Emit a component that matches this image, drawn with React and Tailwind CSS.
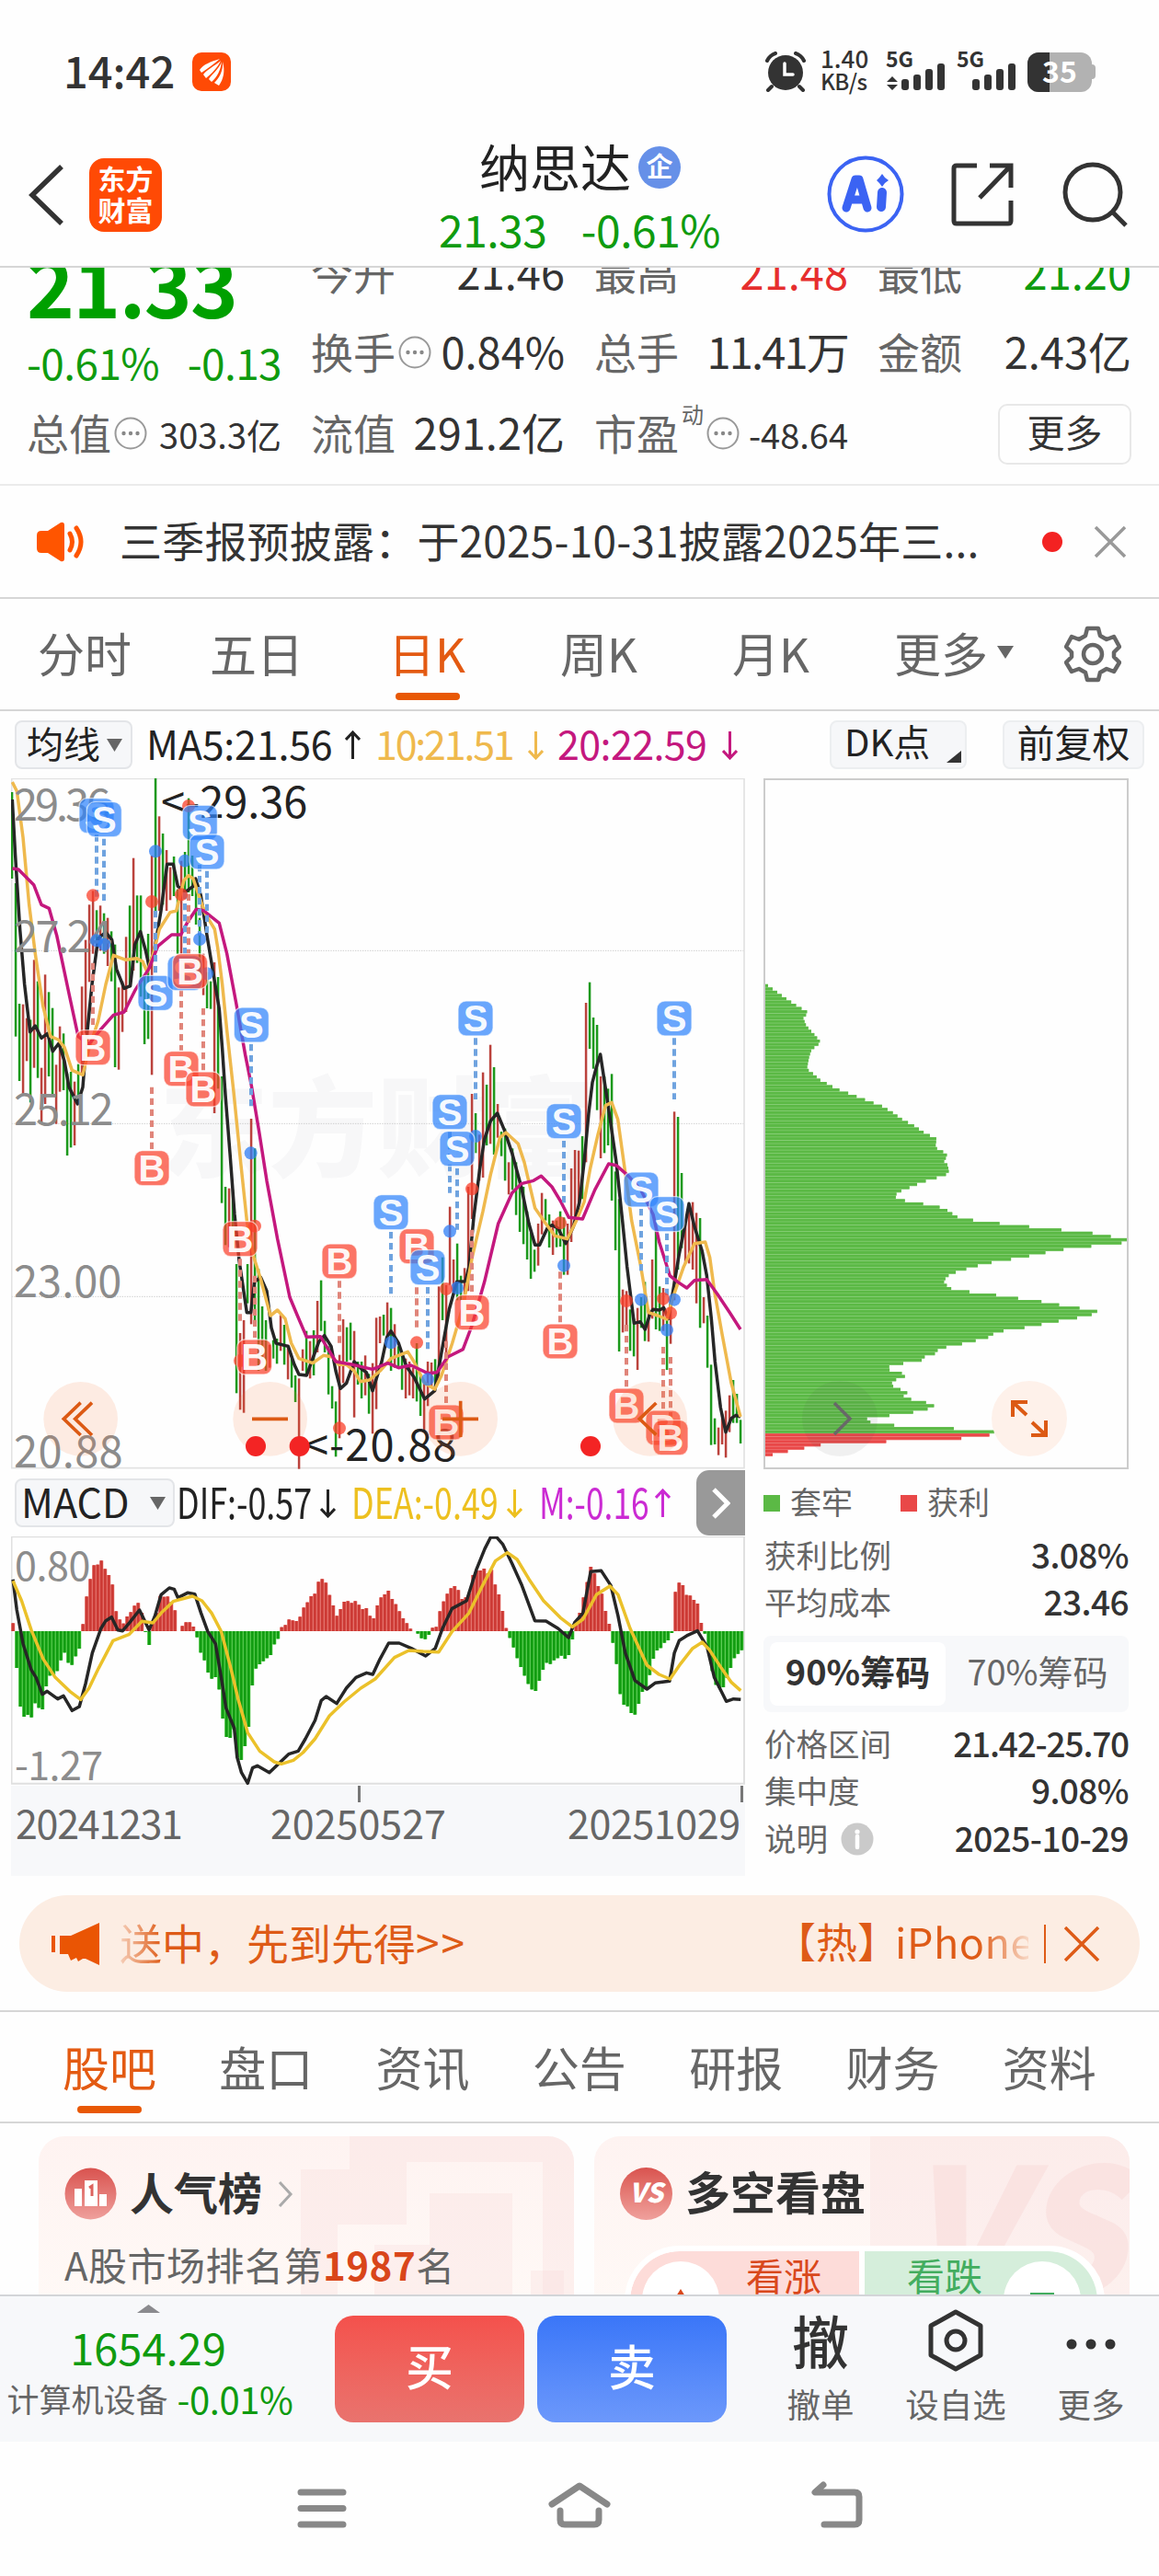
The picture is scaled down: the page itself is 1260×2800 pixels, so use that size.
import React from 'react';

// [high, low, up] per trading day
const CANDLES = [
  [273,555,0],[570,1070,0],[963,1215,0],[965,1260,1],[1010,1150,1],[1015,1285,0],[820,1172,1],[890,1205,0],[1172,1350,1],[868,1290,1],
  [925,1200,0],[977,1262,0],[1162,1355,1],[1037,1250,1],[1060,1245,0],[1190,1458,0],[1185,1432,0],[1217,1425,1],[1160,1290,0],[907,1190,1],
  [755,1060,1],[640,892,1],[595,800,1],[658,760,0],[643,790,1],[668,800,0],[683,840,1],[727,890,0],[770,1170,0],[910,1178,1],
  [890,1055,1],[745,990,1],[643,910,0],[488,855,1],[610,830,0],[610,940,0],[870,1095,0],[735,1078,0],[480,1195,1],[228,660,0],
  [352,660,1],[408,640,0],[462,660,1],[518,625,1],[483,612,0],[590,800,0],[497,800,1],[468,600,0],[293,600,0],[480,612,0],
  [560,705,0],[683,890,0],[800,935,1],[860,978,0],[890,980,0],[828,1320,1],[876,1240,0],[1200,1613,0],[1560,1750,0],[1565,1757,1],
  [1570,1700,0],[1812,2233,0],[2037,2287,1],[1995,2297,1],[1812,1940,0],[1338,2008,1],[1435,2000,0],[1828,2160,0],[1950,2135,0],[1995,2160,0],
  [2075,2150,1],[2060,2120,0],[2055,2137,0],[1978,2095,1],[2010,2140,0],[2075,2188,1],[2120,2215,0],[2175,2262,0],[2185,2480,1],[2090,2160,1],
  [2030,2175,0],[2063,2185,1],[2028,2175,0],[1932,2100,1],[1865,2030,0],[1997,2100,0],[2080,2237,0],[2210,2283,0],[2260,2440,0],[2108,2380,1],
  [1992,2200,1],[2018,2130,0],[2003,2125,0],[2030,2312,1],[2130,2205,0],[2130,2250,0],[2110,2240,1],[2170,2300,0],[2135,2365,1],[1987,2285,1],
  [1983,2070,1],[1977,2045,0],[1937,2060,1],[1955,2160,0],[2008,2150,1],[2080,2150,0],[2110,2222,0],[2120,2250,1],[2130,2240,1],[2150,2250,1],
  [2070,2260,0],[2175,2307,0],[2200,2355,1],[2130,2275,1],[2133,2210,1],[2122,2220,0],[1885,2180,1],[1790,1995,0],[1880,2100,1],[1625,1880,1],
  [1797,1900,1],[1745,1930,0],[1850,1930,0],[1825,1930,1],[1560,1900,1],[1257,1665,1],[1320,1450,0],[1390,1540,1],[1187,1530,1],[1227,1425,0],
  [1097,1420,1],[1170,1455,0],[1290,1400,1],[1380,1460,0],[1370,1540,0],[1480,1585,1],[1435,1570,0],[1480,1652,0],[1540,1707,0],[1560,1747,0],
  [1640,1797,0],[1710,1860,0],[1765,1837,0],[1680,1817,1],[1580,1715,1],[1600,1670,0],[1650,1758,0],[1670,1782,1],[1670,1757,0],[1640,1755,0],
  [1660,1847,0],[1680,1847,1],[1500,1740,1],[1440,1660,1],[1442,1620,1],[1395,1600,0],[960,1480,1],[893,1110,0],[1008,1175,0],[1032,1310,0],
  [1200,1467,1],[1200,1450,0],[1240,1425,0],[1192,1605,0],[1510,1767,0],[1600,2097,0],[1895,2035,1],[1900,2010,1],[1960,2095,0],[1990,2113,0],
  [1955,2157,1],[1920,2020,0],[1870,2063,0],[1960,2065,1],[1797,1990,1],[1700,2025,0],[1885,2030,0],[1890,2030,1],[1990,2157,0],[1940,2072,1],
  [1315,1930,1],[1332,1830,0],[1515,1760,0],[1680,1810,1],[1640,1810,1],[1610,1830,1],[1645,1940,1],[1662,2020,0],[1920,2005,1],[1980,2150,0],
  [2140,2402,0],[2315,2400,0],[2345,2435,1],[2300,2400,1],[2290,2443,1],[2240,2360,1],[2190,2330,0],[2235,2330,0],[2320,2397,0],
];

const MA5 = '40,297 50,480 65,720 80,900 98,1055 115,1035 135,1075 155,1060 172,1118 192,1092 210,1150 225,1235 253,1290 270,1235 285,1050 300,900 320,750 345,730 365,755 380,850 405,913 425,905 440,770 458,728 475,790 487,845 505,780 525,660 545,508 565,508 580,580 605,598 630,580 638,555 655,610 675,740 700,890 715,980 725,1110 735,1260 750,1450 765,1650 780,1800 805,1970 818,1970 830,1870 850,1855 870,1900 885,2020 900,2070 940,2080 960,2140 975,2172 1000,2175 1020,2120 1040,2065 1058,2045 1080,2080 1095,2160 1110,2218 1130,2200 1155,2130 1180,2155 1195,2165 1215,2225 1245,2130 1262,2050 1275,2030 1300,2070 1325,2145 1350,2180 1385,2252 1418,2225 1440,2100 1465,1960 1490,1870 1518,1868 1530,1820 1545,1660 1565,1500 1580,1405 1600,1345 1622,1320 1645,1375 1670,1450 1700,1560 1725,1680 1745,1750 1760,1750 1785,1695 1800,1685 1820,1695 1845,1745 1870,1690 1890,1610 1905,1480 1920,1320 1932,1220 1945,1170 1958,1128 1972,1220 1990,1340 2010,1480 2030,1670 2045,1820 2068,2005 2088,2000 2104,2025 2120,1975 2130,1960 2150,1962 2165,1955 2180,1990 2190,1930 2215,1780 2235,1680 2247,1615 2265,1690 2290,1770 2305,1850 2320,1990 2332,2130 2350,2280 2367,2360 2385,2315 2400,2305 2415,2310';
const MA10 = '40,240 55,270 75,420 95,640 115,800 140,970 165,1070 190,1080 210,1105 235,1180 270,1195 290,1110 320,1020 345,900 370,805 410,820 445,815 465,825 480,860 500,800 520,720 555,665 575,660 600,560 615,545 630,555 645,600 670,670 700,720 710,780 725,900 740,1050 762,1250 785,1480 805,1670 828,1790 850,1860 882,1980 905,1962 930,1990 950,2070 975,2120 1020,2135 1055,2110 1085,2115 1105,2140 1130,2140 1155,2160 1175,2195 1205,2190 1240,2160 1275,2120 1330,2098 1350,2130 1385,2200 1418,2220 1440,2175 1475,2070 1510,1950 1540,1790 1575,1640 1600,1520 1630,1400 1650,1383 1690,1420 1710,1480 1745,1630 1780,1680 1810,1720 1850,1730 1880,1670 1905,1610 1925,1500 1950,1390 1975,1295 1995,1285 2015,1340 2040,1520 2060,1670 2090,1820 2115,1970 2145,1980 2175,1992 2195,1920 2230,1820 2265,1745 2300,1740 2315,1790 2330,1900 2355,2040 2385,2200 2415,2310';
const MA20 = '40,522 60,525 110,575 135,640 160,652 185,740 225,930 255,1070 290,1095 330,1045 370,1000 405,990 440,920 485,850 515,775 560,738 590,738 610,700 640,655 665,660 715,700 740,800 770,960 800,1130 820,1230 845,1380 870,1540 905,1730 945,1920 970,1980 1000,2050 1045,2048 1095,2130 1150,2140 1215,2155 1265,2135 1300,2150 1340,2142 1395,2168 1425,2165 1460,2115 1510,2090 1540,2010 1580,1870 1625,1680 1670,1580 1700,1550 1740,1540 1765,1525 1800,1560 1830,1610 1855,1660 1900,1665 1940,1570 1985,1485 2010,1490 2050,1525 2090,1570 2130,1650 2150,1740 2185,1850 2210,1870 2240,1890 2265,1865 2305,1862 2340,1910 2380,1970 2415,2025';

// DK signals: dashed links [type, x, from, to], dots and boxes [type, x, y]
const LINKS = [
  ['S',315,412,615],['S',339,425,627],['S',507,660,865],['S',603,600,800],['S',651,510,740],['S',675,530,732],['S',819,1095,1297],['S',1551,1075,1275],
  ['S',2199,1075,1275],['S',1467,1380,1580],['S',1491,1500,1700],['S',1275,1707,1910],['S',1395,1887,2090],['S',1839,1410,1612],['S',2091,1632,1835],['S',2175,1712,1915],
  ['B',303,830,1045],['B',615,605,800],['B',591,918,1115],['B',663,978,1180],['B',495,1235,1437],['B',783,1795,2000],['B',831,1850,2055],['B',1107,1867,2070],
  ['B',1359,1888,2020],['B',1455,2063,2268],['B',1539,1700,1910],['B',1827,1837,2002],['B',2043,2010,2212],['B',2163,2082,2290],['B',2187,2115,2320],
];
const DOTS = [
  ['S',507,466],['S',603,497],['S',315,757],['S',340,770],['S',651,753],['S',675,865],['S',818,1450],['S',1467,1705],['S',1491,1890],['S',1275,2068],
  ['S',1395,2188],['S',1551,1395],['S',1839,1817],['S',2091,1928],['S',2175,2027],['S',2199,1928],
  ['B',303,610],['B',495,630],['B',615,318],['B',591,607],['B',831,1688],['B',783,2127],['B',1107,2347],['B',1359,2068],['B',1455,1893],['B',1539,1567],
  ['B',1827,1678],['B',2043,1932],['B',2163,1925],['B',2187,1972],
];
const SIGNALS = [
  ['S',315,350],['S',340,362],['S',652,373],['S',675,468],['S',507,928],['S',603,863],['B',620,857],['B',303,1106],['B',591,1175],['B',663,1242],
  ['S',820,1032],['B',495,1499],['B',783,1730],['B',830,2115],['B',1107,1803],['S',1551,1011],['S',2199,1011],['S',1467,1316],['S',1491,1436],
  ['S',1275,1643],['B',1359,1754],['S',1395,1823],['S',1839,1346],['B',1539,1970],['B',1827,2064],['S',2091,1569],['S',2175,1649],
  ['B',2043,2274],['B',1455,2328],['B',2163,2346],['B',2187,2378],
];

const MACD = [26,-120,-246,-279,-273,-281,-235,-250,-255,-180,-145,-142,-130,-95,-70,-103,-110,-82,-57,23,113,170,215,217,230,203,183,152,65,38,25,48,62,83,92,60,-3,-45,30,60,115,112,113,95,68,0,17,29,29,15,-20,-70,-95,-135,-155,-150,-190,-285,-345,-348,-320,-412,-420,-375,-312,-177,-122,-108,-98,-88,-78,-43,-25,13,20,38,35,33,47,77,94,114,122,161,170,158,118,84,50,72,96,98,92,98,86,72,75,50,42,84,110,120,132,105,88,65,42,26,8,0,-8,-23,-26,-12,11,14,65,97,122,140,147,134,105,110,124,183,198,198,204,188,200,152,120,66,10,-22,-53,-88,-117,-145,-172,-190,-195,-162,-126,-103,-107,-95,-88,-80,-90,-78,-27,30,60,110,160,210,188,147,122,66,24,-38,-107,-205,-240,-245,-267,-272,-237,-198,-183,-143,-90,-63,-55,-38,-30,-6,128,158,150,118,116,102,90,27,-8,-60,-130,-175,-186,-183,-152,-120,-88,-74,-62];
const DIF = '27,380 35,480 48,590 65,675 75,700 88,755 98,745 120,770 132,760 150,808 165,795 178,720 192,620 210,540 220,515 232,503 245,545 255,548 270,520 290,480 310,545 322,500 335,430 352,408 362,412 370,440 390,424 405,428 418,490 432,550 448,590 460,700 470,800 487,865 493,960 502,1010 515,1045 525,995 535,988 560,1010 580,980 600,950 620,940 635,900 655,840 668,775 678,762 700,785 720,735 740,700 762,685 775,690 790,640 808,588 830,588 855,605 885,630 905,605 920,540 940,475 970,450 990,350 1008,280 1020,243 1032,242 1045,265 1065,330 1085,400 1112,515 1135,516 1160,540 1182,570 1195,520 1212,490 1228,355 1250,352 1270,400 1285,500 1300,620 1320,710 1345,738 1362,718 1392,712 1402,620 1412,580 1430,562 1450,548 1470,600 1485,700 1510,778 1525,770 1540,772';
const DEA = '27,385 45,450 65,545 90,640 115,700 145,745 168,772 185,735 205,670 235,580 268,560 295,517 318,522 335,490 360,452 400,435 420,450 440,490 460,550 480,670 495,770 515,880 540,940 570,975 585,982 610,970 630,945 655,900 685,825 715,780 750,735 780,705 820,635 850,612 880,615 912,617 940,550 975,490 1000,410 1030,320 1055,293 1075,315 1100,380 1130,450 1165,505 1190,535 1212,510 1240,430 1268,402 1285,430 1310,540 1345,660 1370,690 1393,705 1415,655 1440,605 1460,585 1475,610 1500,670 1520,715 1540,743';

// chip distribution, [price position, volume]
const CHIPS = [[78,75],[87,90],[96,105],[105,120],[114,135],[123,151],[132,167],[141,185],[150,203],[159,199],[168,190],[186,199],[195,207],[213,227],[231,245],[240,239],[249,225],[258,215],[275,209],[302,203],[311,208],[320,222],[338,246],[347,267],[356,286],[365,309],[374,338],[392,393],[410,449],[428,484],[446,514],[464,554],[482,585],[500,627],[515,622],[527,628],[536,650],[545,661],[563,650],[572,663],[590,666],[599,655],[608,621],[617,585],[626,558],[635,533],[644,506],[658,485],[669,520],[678,580],[687,635],[696,661],[714,693],[723,744],[732,831],[741,928],[750,1034],[759,1136],[768,1196],[776,1251],[785,1240],[794,1140],[803,1046],[812,986],[821,933],[830,874],[839,809],[848,763],[857,725],[866,690],[875,666],[884,655],[893,650],[902,659],[911,672],[920,731],[929,819],[938,891],[947,968],[956,1026],[965,1093],[974,1151],[983,1133],[992,1085],[1001,1024],[1010,968],[1019,912],[1028,843],[1037,810],[1046,794],[1055,752],[1064,707],[1073,655],[1082,628],[1091,620],[1100,585],[1108,580],[1117,519],[1126,471],[1135,471],[1144,512],[1153,523],[1162,494],[1171,480],[1180,484],[1189,508],[1198,530],[1207,518],[1216,543],[1225,592],[1234,618],[1243,596],[1252,548],[1261,469],[1270,396],[1279,410],[1288,491],[1297,692],[1305,815],[1314,803],[1323,719],[1332,471],[1341,249],[1350,195],[1359,141],[1368,90]];

function chipAt(y) {
  for (let i = 1; i < CHIPS.length; i++) {
    const [y0, v0] = CHIPS[i - 1];
    const [y1, v1] = CHIPS[i];
    if (y <= y1) return v0 + ((v1 - v0) * (y - y0)) / (y1 - y0);
  }
  return 90;
}

function MoreDots() {
  return (
    <svg className="w-[36px] h-[36px] shrink-0" viewBox="0 0 36 36" fill="none">
      <circle cx="18" cy="18" r="16.5" stroke="#999" strokeWidth="2" />
      <circle cx="10.5" cy="18" r="2.2" fill="#888" />
      <circle cx="18" cy="18" r="2.2" fill="#888" />
      <circle cx="25.5" cy="18" r="2.2" fill="#888" />
    </svg>
  );
}

function Signal({ x, y }) {
  return (
    <g fill="#333">
      <rect x={x} y={y + 17} width="8" height="12" rx="3" />
      <rect x={x + 13} y={y + 12} width="8" height="17" rx="3" />
      <rect x={x + 26} y={y + 6} width="8" height="23" rx="3" />
      <rect x={x + 39} y={y} width="8" height="29" rx="3" />
    </g>
  );
}

function StatusBar() {
  return (
    <div className="h-[139px] relative flex items-center pt-[17px] pl-[69px] pr-[69px]">
      <span className="text-[47px] font-medium leading-[47px] -mt-[6px]">14:42</span>
      <svg className="ml-[19px] w-[42px] h-[42px]" viewBox="0 0 42 42">
        <rect width="42" height="42" rx="10" fill="#ff4a05" />
        <path d="M30 7 C20 10 12 13 8 19 L10 22 C16 18 24 12 30 7Z M31 9 C24 15 15 19 12 24 L15 28 C21 23 28 16 31 9Z M32 10 C29 18 21 24 18 29 L21 32 C27 27 31 19 32 10Z M33 10 C34 20 29 28 24 33 L29 36 C34 29 36 20 33 10Z" fill="#fff" />
      </svg>
      <div className="ml-auto flex items-center">
        <svg className="w-[46px] h-[44px]" viewBox="0 0 46 44" fill="none" stroke="#333" strokeLinecap="round">
          <circle cx="23" cy="23" r="19" fill="#333" stroke="none" />
          <path d="M3 10 Q6 4 12 2 M43 10 Q40 4 34 2" strokeWidth="4" />
          <path d="M8 38 L4 42 M38 38 L42 42" strokeWidth="4" />
          <path d="M22 13 V25 H31" stroke="#fff" strokeWidth="3.5" />
        </svg>
        <div className="ml-[15px] w-[56px] text-[26px] font-medium leading-[25px] -mt-[6px] whitespace-nowrap">
          <div>1.40</div>
          <div className="text-[24px] tracking-[-0.6px]">KB/s</div>
        </div>
        <div className="relative ml-[15px] w-[144px] h-[44px]">
          <svg className="w-[144px] h-[44px]" viewBox="0 0 144 44">
            <path d="M7 27 L13 33 H1Z M7 42 L13 36 H1Z" fill="#333" />
            <Signal x={17} y={13} />
            <Signal x={94} y={13} />
          </svg>
          <span className="absolute left-0 -top-[4px] text-[23px] font-bold leading-[23px]">5G</span>
          <span className="absolute left-[77px] -top-[4px] text-[23px] font-bold leading-[23px]">5G</span>
        </div>
        <div className="relative ml-[10px] w-[70px] h-[43px] rounded-[12px] overflow-hidden bg-[#b2b2b2] flex items-center justify-center">
          <div className="absolute left-0 top-0 h-full w-[24px] bg-[#333]"></div>
          <span className="relative text-white text-[32px] font-bold leading-[32px] -mt-[5px]">35</span>
        </div>
        <div className="w-[4px] h-[16px] bg-[#b2b2b2] rounded-r"></div>
      </div>
    </div>
  );
}

function Header() {
  return (
    <div className="h-[152px] border-b-2 border-[#d6d6d6] flex pl-[30px] relative">
      <svg className="w-[40px] h-[68px] mt-[39px]" viewBox="0 0 40 68" fill="none" stroke="#333" strokeWidth="5.5">
        <path d="M37 3 L5 34 L37 65" />
      </svg>
      <div className="ml-[27px] mt-[33px] w-[79px] h-[80px] rounded-[16px] bg-[#ff4a05] text-white text-[30px] font-bold flex flex-col items-center justify-center leading-[34px] pb-[4px]">
        <div>东方</div>
        <div>财富</div>
      </div>
      <div className="ml-[301px] w-[306px]">
        <div className="flex items-center ml-[44px] mt-[15px] h-[56px]">
          <span className="text-[55px] leading-[55px] -mt-[6px] text-[#222]">纳思达</span>
          <div className="ml-[8px] w-[46px] h-[46px] rounded-full bg-[#6690e8] text-white text-[29px] font-bold leading-[40px] text-center">企</div>
        </div>
        <div className="flex justify-between mt-[14px] text-[#0f9b0f] text-[48px] leading-[48px] tracking-[-0.5px]">
          <span>21.33</span>
          <span>-0.61%</span>
        </div>
      </div>
      <svg className="ml-[116px] mt-[30px] w-[84px] h-[84px]" viewBox="0 0 84 84" fill="none">
        <circle cx="42" cy="42" r="39.5" stroke="#3b63f3" strokeWidth="4" />
        <path d="M21 57 L31 26 H35 L44 57 M24 48 H41" stroke="#3b63f3" strokeWidth="9" strokeLinecap="round" strokeLinejoin="round" />
        <path d="M60 40 L59 56" stroke="#3b63f3" strokeWidth="10" strokeLinecap="round" />
        <path d="M60 20 L63 24 L67 27 L63 30 L60 34 L57 30 L54 27 L57 24Z" fill="#3b63f3" />
      </svg>
      <svg className="ml-[50px] mt-[37px] w-[72px] h-[72px]" viewBox="0 0 72 72" fill="none" stroke="#333" strokeWidth="5">
        <path d="M29 4 H7 Q4 4 4 7 V64 Q4 67 7 67 H63 Q66 67 66 64 V42" />
        <path d="M43 4 H66 V28 M65 5 L32 39" />
      </svg>
      <svg className="ml-[49px] mt-[36px] w-[74px] h-[74px]" viewBox="0 0 74 74" fill="none" stroke="#333" strokeWidth="5">
        <circle cx="34" cy="34" r="30" />
        <path d="M56 56 L70 70" />
      </svg>
    </div>
  );
}

function Cell({ label, value, color, icon, small, tight, sup }) {
  return (
    <div className="flex items-center h-[50px] text-[46px] leading-[50px] text-[#666]">
      <span>{label}</span>
      {sup && <span className="text-[24px] leading-[24px] -mt-[38px] ml-[3px]">{sup}</span>}
      {icon && <span className="mt-[3px] ml-[3px]"><MoreDots /></span>}
      <span className={`ml-auto whitespace-nowrap ${small ? 'text-[38px] mt-[6px]' : tight ? 'text-[47px] tracking-[-1.8px]' : 'text-[47px]'} ${color || 'text-[#333]'}`}>{value}</span>
    </div>
  );
}

function Quote() {
  return (
    <div className="h-[237px] border-b-2 border-[#ebebeb] overflow-hidden pl-[29px] pr-[29px]">
      <div className="grid grid-cols-[277px_276px_276px_276px] gap-x-[32px] -mt-[21px]">
        <div className="h-[134px] -mt-[6px]">
          <div className="text-[#00a000] text-[88px] font-bold leading-[87px] tracking-[-1.6px] h-[87px]">21.33</div>
          <div className="flex justify-between text-[#0f9b0f] text-[46px] leading-[45px] mt-[20px] tracking-[-0.6px]">
            <span>-0.61%</span>
            <span>-0.13</span>
          </div>
        </div>
        <div className="flex flex-col gap-[36px]">
          <Cell label="今开" value="21.46" />
          <Cell label="换手" value="0.84%" icon />
        </div>
        <div className="flex flex-col gap-[36px]">
          <Cell label="最高" value="21.48" color="text-[#e62e2e]" />
          <Cell label="总手" value="11.41万" tight />
        </div>
        <div className="flex flex-col gap-[36px]">
          <Cell label="最低" value="21.20" color="text-[#0f9b0f]" />
          <Cell label="金额" value="2.43亿" />
        </div>
      </div>
      <div className="grid grid-cols-[277px_276px_276px_276px] gap-x-[32px] mt-[38px]">
        <Cell label="总值" value="303.3亿" icon small />
        <Cell label="流值" value="291.2亿" />
        <Cell label="市盈" sup="动" value="-48.64" icon small />
        <div className="ml-auto w-[145px] h-[66px] mt-[-5px] border-2 border-[#e8e8e8] rounded-[10px] text-[41px] leading-[54px] text-center text-[#333]">更多</div>
      </div>
    </div>
  );
}

function Notice() {
  return (
    <div className="h-[123px] border-b-2 border-[#d6d6d6] flex items-center pl-[40px] pr-[35px]">
      <svg className="w-[52px] h-[44px]" viewBox="0 0 52 44">
        <path d="M0 15 Q0 10 5 10 H12 L26 1 Q30 0 30 4 V40 Q30 44 26 43 L12 34 H5 Q0 34 0 29Z" fill="#ff5500" />
        <path d="M36 13 Q41 22 36 31 M43 7 Q53 22 43 37" fill="none" stroke="#ff5500" strokeWidth="5" strokeLinecap="round" />
      </svg>
      <span className="ml-[38px] text-[46px] leading-[50px] -mt-[6px] text-[#333] whitespace-nowrap tracking-[0.2px]">三季报预披露：于2025-10-31披露2025年三...</span>
      <div className="ml-auto w-[22px] h-[22px] rounded-full bg-[#f32222] shrink-0"></div>
      <svg className="ml-[34px] w-[36px] h-[36px] shrink-0" viewBox="0 0 36 36" stroke="#999" strokeWidth="3.5">
        <path d="M2 2 L34 34 M34 2 L2 34" />
      </svg>
    </div>
  );
}

function PeriodTabs() {
  return (
    <div className="h-[122px] border-b-2 border-[#d6d6d6] relative flex items-center text-[51px] leading-[60px] text-[#666] pl-[41px] pr-[41px]">
      <div className="flex items-center -mt-[4px]">
        <span className="w-[187px]">分时</span>
        <span className="w-[194px]">五日</span>
        <span className="w-[187px] text-[#e35a12] relative">
          日K
          <span className="absolute left-[8px] top-[74px] w-[70px] h-[8px] rounded-full bg-[#e85805]"></span>
        </span>
        <span className="w-[187px]">周K</span>
        <span className="w-[176px]">月K</span>
        <span>更多</span>
        <svg className="ml-[10px] w-[18px] h-[14px]" viewBox="0 0 18 14"><path d="M0 0 H18 L9 14Z" fill="#666" /></svg>
      </div>
      <svg className="ml-auto w-[62px] h-[62px]" viewBox="0 0 62 62" fill="none" stroke="#666" strokeWidth="4.5" strokeLinejoin="round">
        <path d="M25 3 H37 L39 11 L46 15 L54 12 L60 23 L54 29 V34 L60 40 L54 50 L46 47 L39 51 L37 59 H25 L23 51 L16 47 L8 50 L2 40 L8 34 V29 L2 23 L8 12 L16 15 L23 11Z" />
        <circle cx="31" cy="31" r="10" />
      </svg>
    </div>
  );
}

function Arrow({ up, color }) {
  return (
    <svg className="w-[17px] h-[32px] shrink-0" viewBox="0 0 17 32" fill="none" stroke={color} strokeWidth="3">
      <path d={up ? 'M8.5 31 V2 M1 10 L8.5 2 L16 10' : 'M8.5 1 V30 M1 22 L8.5 30 L16 22'} />
    </svg>
  );
}

function MaRow() {
  return (
    <div className="h-[73px] flex items-center text-[43px] leading-[50px] pl-[16px] pr-[16px] text-[#222]">
      <div className="w-[128px] h-[53px] border-2 border-[#e3e5e8] rounded-[8px] bg-[#f6f7f9] flex items-center pl-[11px] shrink-0">
        <span className="text-[40px] -mt-[5px]">均线</span>
        <svg className="ml-[7px] w-[17px] h-[14px]" viewBox="0 0 17 14"><path d="M0 0 H17 L8.5 14Z" fill="#666" /></svg>
      </div>
      <span className="ml-[15px] -mt-[5px] w-[216px] whitespace-nowrap tracking-[-0.2px]">MA5:21.56</span>
      <Arrow up color="#222" />
      <span className="ml-[16px] -mt-[5px] w-[166px] whitespace-nowrap text-[#efb94d] tracking-[-2.2px]">10:21.51</span>
      <Arrow color="#efb94d" />
      <span className="ml-[15px] -mt-[5px] w-[179px] whitespace-nowrap text-[#c4187e] tracking-[-0.6px]">20:22.59</span>
      <Arrow color="#c4187e" />
      <div className="relative ml-auto w-[149px] h-[53px] border-2 border-[#eceef0] rounded-[8px] bg-[#f6f7f9] pl-[14px] text-[40px] leading-[40px] shrink-0">
        DK点
        <svg className="absolute right-[4px] bottom-[5px] w-[16px] h-[13px]" viewBox="0 0 16 13"><path d="M16 0 V13 H0Z" fill="#333" /></svg>
      </div>
      <div className="ml-[39px] w-[154px] h-[53px] border-2 border-[#eceef0] rounded-[8px] bg-[#f6f7f9] text-center text-[41px] leading-[40px] shrink-0">前复权</div>
    </div>
  );
}

function KChart() {
  return (
    <svg className="block w-[798px] h-[751px]" viewBox="36 228 2394 2253" fill="none">
      <text x="520" y="1500" fontSize="355" fontWeight="900" fill="#f7f7f8">东方财富</text>
      <path d="M38 790 H2428 M38 1354 H2428 M38 1918 H2428" stroke="#ccc" strokeWidth="3" strokeDasharray="4 4" />
      <rect x="38" y="229" width="2389" height="2248" stroke="#e2e2e2" strokeWidth="5" />
      {CANDLES.map(([h, l, up], i) => (
        <rect key={i} x={35.5 + 12 * i} y={h} width="7.5" height={l - h} fill={up ? '#bb423c' : '#1b991b'} />
      ))}
      <g strokeWidth="10.5" strokeLinejoin="round">
        <polyline points={MA5} stroke="#262626" />
        <polyline points={MA10} stroke="#efb94d" />
        <polyline points={MA20} stroke="#c4187e" />
      </g>
      <g fill="#8c8c8c" fontSize="141">
        <text x="45" y="365" textLength="315">29.36</text>
        <text x="45" y="796" textLength="322">27.24</text>
        <text x="45" y="1360" textLength="326">25.12</text>
        <text x="45" y="1921" textLength="352">23.00</text>
        <text x="45" y="2474" textLength="356">20.88</text>
      </g>
      <g fill="#222" fontSize="141">
        <text x="525" y="358" textLength="478">&lt;-29.36</text>
        <text x="993" y="2455" textLength="497">&lt;-20.88</text>
      </g>
      {LINKS.map(([t, x, a, b], i) => (
        <path key={i} d={`M${x} ${a} V${b}`} stroke={t === 'S' ? '#6fa3df' : '#e0857a'} strokeWidth="12" strokeDasharray="22 14" />
      ))}
      {DOTS.map(([t, x, y], i) => (
        <circle key={i} cx={x} cy={y} r="21" fill={t === 'S' ? '#2f7df5' : '#f9402b'} opacity="0.75" />
      ))}
      {SIGNALS.map(([t, x, y], i) => (
        <g key={i}>
          <rect x={x - 57} y={y - 57} width="114" height="114" rx="26" fill={t === 'S' ? '#2f83fb' : '#f9402b'} fillOpacity="0.72" stroke="#fff" strokeOpacity="0.6" strokeWidth="4" />
          <text x={x} y={y + 43} fontSize="120" fontWeight="700" fill="#fff" fillOpacity="0.95" textAnchor="middle" fontFamily="Liberation Sans">{t}</text>
        </g>
      ))}
      {[263, 881, 1502, 2120].map((x) => (
        <circle key={x} cx={x} cy="2317" r="121" fill="#fb7a3c" fillOpacity="0.14" />
      ))}
      <g stroke="#dc5a14" strokeWidth="11">
        <path d="M263 2264 L208 2317 L263 2370 M300 2264 L245 2317 L300 2370" />
        <path d="M822 2317 H939" />
        <path d="M1443 2317 H1560 M1502 2258 V2376" />
        <path d="M2140 2265 L2086 2317 L2140 2369" />
      </g>
      <g fill="#f32424">
        <circle cx="834" cy="2406" r="33" />
        <circle cx="977" cy="2406" r="33" />
        <circle cx="1926" cy="2406" r="33" />
      </g>
    </svg>
  );
}

function MacdRow() {
  return (
    <div className="h-[73px] flex items-center pl-[4px] text-[46px] leading-[50px] text-[#222]">
      <div className="w-[174px] h-[53px] border-2 border-[#e3e5e8] rounded-[8px] bg-[#f6f7f9] flex items-center pl-[5px] shrink-0">
        <span className="text-[43px] -mt-[5px]">MACD</span>
        <svg className="ml-auto mr-[8px] w-[17px] h-[14px]" viewBox="0 0 17 14"><path d="M0 0 H17 L8.5 14Z" fill="#666" /></svg>
      </div>
      <span className="ml-[2px] -mt-[5px] w-[156px] whitespace-nowrap"><span className="inline-block origin-left scale-x-[.78]">DIF:-0.57</span></span>
      <Arrow color="#222" />
      <span className="ml-[17px] -mt-[5px] w-[169px] whitespace-nowrap text-[#edc01f]"><span className="inline-block origin-left scale-x-[.78]">DEA:-0.49</span></span>
      <Arrow color="#edc01f" />
      <span className="ml-[18px] -mt-[5px] w-[126px] whitespace-nowrap text-[#cb2bd3]"><span className="inline-block origin-left scale-x-[.77]">M:-0.16</span></span>
      <Arrow up color="#cb2bd3" />
      <div className="ml-auto w-[53px] h-[71px] bg-[#999] rounded-l-[14px] flex items-center justify-center shrink-0">
        <svg className="w-[20px] h-[34px]" viewBox="0 0 20 34" fill="none" stroke="#fff" strokeWidth="5"><path d="M2 2 L17 17 L2 32" /></svg>
      </div>
    </div>
  );
}

function MacdChart() {
  return (
    <div className="relative h-[270px]">
      <svg className="block w-[798px] h-[270px]" viewBox="23 240 1526 810" preserveAspectRatio="none" fill="none">
        <rect x="24" y="241" width="1523" height="805" stroke="#e0e0e0" strokeWidth="2" vectorEffect="non-scaling-stroke" />
        {MACD.map((v, i) => (
          <g key={i}>
            <rect x={23.4 + 7.65 * i} y={v > 0 ? 549 - v : 549} width="7.65" height={Math.abs(v)} fill={v > 0 ? '#e05c55' : '#3cc232'} />
            <rect x={24.6 + 7.65 * i} y={v > 0 ? 549 - v : 549} width="5" height={Math.abs(v)} fill={v > 0 ? '#cc3a35' : '#129c12'} />
          </g>
        ))}
        <polyline points={DIF} stroke="#262626" strokeWidth="3.5" strokeLinejoin="round" vectorEffect="non-scaling-stroke" />
        <polyline points={DEA} stroke="#ebc12a" strokeWidth="3.5" strokeLinejoin="round" vectorEffect="non-scaling-stroke" />
      </svg>
      <span className="absolute left-[4px] top-[4px] text-[43px] leading-[50px] text-[#8c8c8c] tracking-[-0.4px]">0.80</span>
      <span className="absolute left-[4px] bottom-[-1px] text-[43px] leading-[50px] text-[#8c8c8c] tracking-[-0.6px]">-1.27</span>
    </div>
  );
}

function ChipPanel() {
  const rows = [];
  for (let k = 0; k < 145; k++) rows.push(78 + 8.96 * k);
  return (
    <div className="w-[397px] ml-[20px]">
      <div className="relative h-[751px] border-2 border-[#ccc]">
        <svg className="block w-[393px] h-[747px]" viewBox="66 -488 1182 1891" preserveAspectRatio="none">
          {rows.map((y) => (
            <g key={y}>
              <rect x="60" y={y - 4.5} width={chipAt(y) - 60} height="8.96" fill={y > 1309 ? '#ef7a78' : '#83cd72'} />
              <rect x="60" y={y - 4.5} width={chipAt(y) - 60} height="7.4" fill={y > 1309 ? '#e94848' : '#5bb945'} />
            </g>
          ))}
        </svg>
        <div className="absolute left-[40px] top-[653px] w-[82px] h-[82px] rounded-full bg-[#505050]/8 flex items-center justify-center">
          <svg className="w-[22px] h-[38px] ml-[5px]" viewBox="0 0 22 38" fill="none" stroke="#686868" strokeWidth="3.5"><path d="M2 2 L19 19 L2 36" /></svg>
        </div>
        <div className="absolute left-[246px] top-[653px] w-[82px] h-[82px] rounded-full bg-[#fef1ea] flex items-center justify-center">
          <svg className="w-[40px] h-[40px]" viewBox="0 0 40 40" fill="none" stroke="#dc5a14" strokeWidth="4">
            <path d="M18 2 H2 V18 M2 2 L17 16 M22 38 H38 V22 M38 38 L23 24" />
          </svg>
        </div>
      </div>
      <div className="flex items-center h-[68px] pt-[6px] text-[34px] leading-[40px] text-[#666]">
        <div className="w-[18px] h-[18px] bg-[#5bb945]"></div>
        <span className="ml-[11px] -mt-[4px]">套牢</span>
        <div className="ml-[52px] w-[18px] h-[18px] bg-[#e94848]"></div>
        <span className="ml-[11px] -mt-[4px]">获利</span>
      </div>
      <Stat label="获利比例" value="3.08%" />
      <Stat label="平均成本" value="23.46" />
      <div className="mt-[10px] h-[83px] rounded-[8px] bg-[#f7f8fa] p-[7px] flex text-[38px] leading-[61px]">
        <div className="w-[191px] rounded-[8px] bg-white font-bold text-center text-[#333] whitespace-nowrap">90%筹码</div>
        <div className="flex-1 text-center text-[#666] pl-[8px]">70%筹码</div>
      </div>
      <div className="h-[9px]"></div>
      <Stat label="价格区间" value="21.42-25.70" tight />
      <Stat label="集中度" value="9.08%" />
      <Stat label="说明" value="2025-10-29" info />
    </div>
  );
}

function Stat({ label, value, info, tight }) {
  return (
    <div className="flex items-center h-[51.5px] text-[34.5px] leading-[44px] text-[#666]">
      <span className="-mt-[4px] ml-[1px]">{label}</span>
      {info && (
        <svg className="ml-[14px] w-[36px] h-[36px]" viewBox="0 0 36 36">
          <circle cx="18" cy="18" r="17.5" fill="#cacaca" />
          <circle cx="18" cy="10" r="2.6" fill="#fff" />
          <path d="M18 15 V27" stroke="#fff" strokeWidth="4.5" strokeLinecap="round" />
        </svg>
      )}
      <span className={`ml-auto -mt-[4px] text-[37px] font-medium text-[#333] ${tight ? 'tracking-[-1.2px]' : 'tracking-[-0.6px]'}`}>{value}</span>
    </div>
  );
}

function Banner() {
  return (
    <div className="mx-[21px] mt-[21px] h-[105px] rounded-full bg-[#fcede3] flex items-center pl-[34px] pr-[43px] text-[#de5b17] text-[45px] leading-[50px]">
      <svg className="w-[54px] h-[46px]" viewBox="0 0 54 46" fill="#ea5504">
        <path d="M1 14 H5 V32 H1Z M10 14 H22 L53 0 V46 L38 39 H35 L30 42 L28 38 L22 41 L19 34 H10Z" />
      </svg>
      <span className="ml-[21px] -mt-[6px] whitespace-nowrap text-[46px]"><span className="bg-linear-to-r from-[#de5b17]/20 to-[#de5b17] bg-clip-text text-transparent">送</span>中，先到先得<span className="tracking-[2px]">&gt;&gt;</span></span>
      <span className="ml-auto -mt-[6px] w-[276px] whitespace-nowrap overflow-hidden">【热】<span className="ml-[-4px] tracking-[0.5px] bg-linear-to-r from-[#de5b17] from-60% to-[#de5b17]/5 bg-clip-text text-transparent">iPhone</span></span>
      <div className="ml-[17px] w-[2px] h-[42px] bg-[#de5b17]"></div>
      <svg className="ml-[19px] w-[40px] h-[38px]" viewBox="0 0 40 38" stroke="#de5b17" strokeWidth="3.5"><path d="M2 1 L38 37 M38 1 L2 37" /></svg>
    </div>
  );
}

function InfoTabs() {
  const tabs = ['盘口', '资讯', '公告', '研报', '财务', '资料'];
  return (
    <div className="mt-[20px] h-[123px] border-y-2 border-[#d6d6d6] flex text-[51px] leading-[60px] text-[#666] pl-[68px] pt-[29px]">
      <span className="w-[170.5px] text-[#e35a12] relative">
        股吧
        <span className="absolute left-[16px] top-[73px] w-[70px] h-[8px] rounded-full bg-[#e85805]"></span>
      </span>
      {tabs.map((t) => (
        <span key={t} className="w-[170.5px]">{t}</span>
      ))}
    </div>
  );
}

function Cards() {
  return (
    <div className="h-[186px] pt-[14px] pl-[42px] flex gap-[22px] overflow-hidden">
      <div className="relative shrink-0 w-[582px] h-[240px] rounded-[28px] overflow-hidden bg-linear-to-b from-[#fef3f1] to-[#fffbf8] pt-[34px] pl-[28px]">
        <svg className="absolute left-0 top-0 w-[582px] h-[240px]" viewBox="0 0 582 240" fill="#f8d8d6" fillOpacity="0.28">
          <path d="M338 0 H582 V240 H548 V28 H400 V96 H325 V240 H285 V36 H338Z" />
          <path d="M425 62 H515 V240 H365 V118 H425Z" />
          <path d="M535 146 H571 V240 H535Z" />
        </svg>
        <div className="relative flex items-center">
          <svg className="w-[57px] h-[57px]" viewBox="0 0 57 57">
            <defs><linearGradient id="badge" x1="0" y1="0" x2="0" y2="1"><stop offset="0" stopColor="#d9534f" /><stop offset="1" stopColor="#efa09c" /></linearGradient></defs>
            <circle cx="28.5" cy="28.5" r="28" fill="url(#badge)" />
            <path d="M11 23 H19 V42 H11Z M22 14 H36 V42 H22Z M38 29 H46 V42 H38Z" fill="#fff" />
            <path d="M27 22 L30 20 V31" fill="none" stroke="#dd625e" strokeWidth="3" />
          </svg>
          <span className="ml-[14px] -mt-[7px] text-[48px] leading-[56px] font-bold text-[#333]">人气榜</span>
          <svg className="ml-[17px] w-[17px] h-[28px]" viewBox="0 0 17 28" fill="none" stroke="#aaa" strokeWidth="3"><path d="M2 1 L14 14 L2 27" /></svg>
        </div>
        <div className="relative mt-[23px] text-[42px] leading-[50px] text-[#666] tracking-[0.5px]">A股市场排名第<b className="text-[#d9461a]">1987</b>名</div>
      </div>
      <div className="relative shrink-0 w-[582px] h-[240px] rounded-[28px] overflow-hidden bg-linear-to-b from-[#fef3f1] to-[#fffbf8] pt-[34px] pl-[28px]">
        <div className="absolute right-0 top-0 w-[282px] h-[240px] bg-[#f8d8d6]/25"></div>
        <span className="absolute right-[6px] top-[-4px] text-[190px] leading-[190px] italic font-black text-[#f8dcda]/60">VS</span>
        <div className="relative flex items-center">
          <div className="w-[57px] h-[57px] rounded-full bg-linear-to-b from-[#d9534f] to-[#efa09c] text-white text-[29px] leading-[51px] font-black italic text-center">VS</div>
          <span className="ml-[14px] -mt-[7px] text-[49px] leading-[56px] font-bold text-[#333]">多空看盘</span>
        </div>
        <div className="absolute left-[33px] top-[119px] w-[522px] h-[120px] rounded-t-[60px] border-[6px] border-white bg-white flex overflow-hidden text-[41px]">
          <div className="w-[249px] bg-[#fddcd9] rounded-tl-[54px] relative text-[#d9481c] leading-[50px] pl-[126px]">
            看涨
            <div className="absolute left-[13px] top-[11px] w-[84px] h-[84px] rounded-full bg-white">
              <svg className="absolute left-[32px] top-[30px] w-[20px] h-[16px]" viewBox="0 0 20 16"><path d="M10 0 L20 16 H0Z" fill="#d9481c" /></svg>
            </div>
          </div>
          <div className="ml-[6px] w-[253px] bg-[#d5eedb] rounded-tr-[54px] relative text-[#43ad5f] leading-[50px] pl-[46px]">
            看跌
            <div className="absolute right-[18px] top-[11px] w-[84px] h-[84px] rounded-full bg-white">
              <div className="absolute left-[29px] top-[34px] w-[26px] h-[20px] bg-[#43ad5f]"></div>
            </div>
          </div>
        </div>
      </div>
    </div>
  );
}

function BottomBar() {
  return (
    <div className="h-[160px] bg-[#f7f8fa] border-t-2 border-[#d3d5d8] flex relative">
      <div className="w-[364px] flex flex-col items-center pr-[42px] pt-[9px]">
        <svg className="w-[25px] h-[9px]" viewBox="0 0 25 9"><path d="M12.5 0 L25 9 H0Z" fill="#8a8a8e" /></svg>
        <div className="text-[#0f9b0f] text-[47px] leading-[50px] mt-[12px]">1654.29</div>
        <div className="mt-[9px] ml-[4px] flex items-center text-[35px] leading-[44px] text-[#666] whitespace-nowrap">计算机设备<span className="ml-[10px] text-[#0f9b0f] text-[40px] tracking-[-0.4px]">-0.01%</span></div>
      </div>
      <div className="mt-[21px] w-[206px] h-[116px] rounded-[20px] bg-linear-to-b from-[#f4514c] to-[#e9736e] text-white text-[52px] font-medium leading-[108px] text-center">买</div>
      <div className="ml-[14px] mt-[21px] w-[206px] h-[116px] rounded-[20px] bg-linear-to-b from-[#3a76f8] to-[#6c98fb] text-white text-[52px] font-medium leading-[108px] text-center">卖</div>
      <div className="ml-[64px] w-[76px] flex flex-col items-center text-[36.5px] text-[#666]">
        <div className="text-[62px] leading-[62px] mt-[16px] font-medium text-[#333]">撤</div>
        <div className="mt-[17px] leading-[44px]">撤单</div>
      </div>
      <div className="ml-[52px] w-[114px] flex flex-col items-center text-[36.5px] text-[#666]">
        <svg className="mt-[14px] w-[64px] h-[68px]" viewBox="0 0 64 68" fill="none" stroke="#333" strokeWidth="5" strokeLinejoin="round">
          <path d="M32 3 L59 18 V50 L32 65 L5 50 V18Z" />
          <circle cx="32" cy="34" r="10" />
        </svg>
        <div className="mt-[13px] leading-[44px] whitespace-nowrap">设自选</div>
      </div>
      <div className="ml-[52px] w-[76px] flex flex-col items-center text-[36.5px] text-[#666]">
        <svg className="mt-[46px] w-[54px] h-[12px]" viewBox="0 0 54 12" fill="#333"><circle cx="6" cy="6" r="5.5" /><circle cx="27" cy="6" r="5.5" /><circle cx="48" cy="6" r="5.5" /></svg>
        <div className="mt-[37px] leading-[44px]">更多</div>
      </div>
    </div>
  );
}

function NavBar() {
  return (
    <div className="flex h-[147px] pt-[42px] pl-[322px]">
      <svg className="w-[56px] h-[54px]" viewBox="0 0 56 54" stroke="#888" strokeWidth="7" strokeLinecap="round">
        <path d="M5 13 H51 M5 30.5 H51 M5 48 H51" />
      </svg>
      <svg className="ml-[217px] w-[70px] h-[54px]" viewBox="0 0 70 54" fill="none" stroke="#888" strokeWidth="7" strokeLinecap="round" strokeLinejoin="round">
        <path d="M5 26 L35 6 L65 26 M14 33 V43 Q14 48 19 48 H51 Q56 48 56 43 V33" />
      </svg>
      <svg className="ml-[216px] w-[60px] h-[54px]" viewBox="0 0 60 54" fill="none" stroke="#888" strokeWidth="7" strokeLinecap="round" strokeLinejoin="round">
        <path d="M14 5 L5 13 H48 Q53 13 53 18 V43 Q53 48 48 48 H15" />
      </svg>
    </div>
  );
}

export default function App() {
  return (
    <div className="w-[1260px] h-[2800px] overflow-hidden bg-[#fefefe] text-[#333] font-['Noto_Sans_CJK_SC',sans-serif]">
      <StatusBar />
      <Header />
      <Quote />
      <Notice />
      <PeriodTabs />
      <MaRow />
      <div className="flex pl-[12px] h-[1193px]">
        <div className="w-[798px]">
          <KChart />
          <MacdRow />
          <MacdChart />
          <div className="relative mt-[1px] h-[98px] bg-[#f7f8fa] flex pl-[5px] pt-[14px] text-[43px] leading-[50px] text-[#666]">
            <span className="w-[277px] tracking-[-1.3px]">20241231</span>
            <span className="w-[323px]">20250527</span>
            <span className="tracking-[-0.4px]">20251029</span>
            <div className="absolute left-[377px] top-0 w-[3px] h-[18px] bg-[#777]"></div>
            <div className="absolute left-[793px] top-0 w-[3px] h-[18px] bg-[#777]"></div>
          </div>
        </div>
        <ChipPanel />
      </div>
      <Banner />
      <InfoTabs />
      <Cards />
      <BottomBar />
      <NavBar />
    </div>
  );
}
